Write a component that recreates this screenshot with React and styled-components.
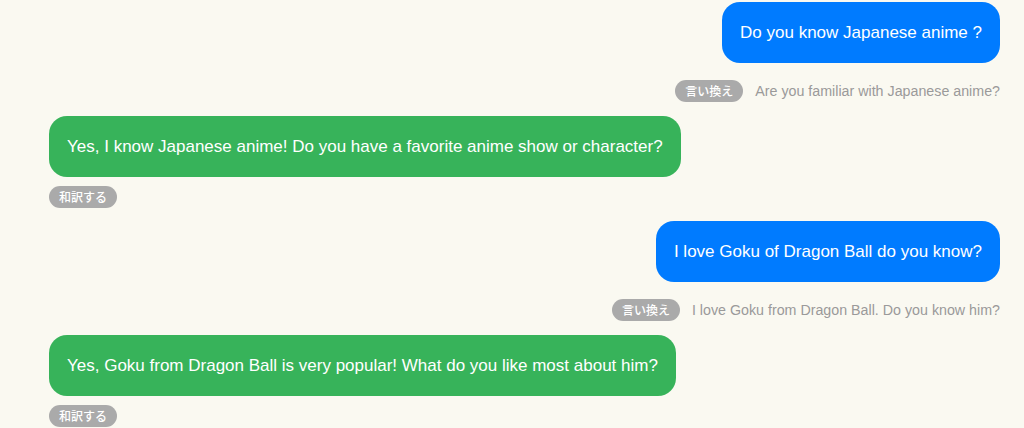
import React from "react";
import styled, { createGlobalStyle } from "styled-components";

const GlobalStyle = createGlobalStyle`
  html, body {
    margin: 0;
    padding: 0;
    background: #faf9f1;
  }
  body {
    font-family: "Liberation Sans", Arial, "Noto Sans CJK JP", sans-serif;
  }
`;

const Chat = styled.div`
  display: flex;
  flex-direction: column;
  padding: 2px 24px 0 49px;
`;

const Block = styled.div`
  display: flex;
  flex-direction: column;
  align-items: ${(p) => (p.$mine ? "flex-end" : "flex-start")};
  gap: ${(p) => (p.$mine ? "17px" : "9px")};
  margin-bottom: ${(p) => (p.$mine ? "14px" : "13px")};
`;

const Bubble = styled.div`
  background: ${(p) => (p.$mine ? "#007bff" : "#37b35a")};
  color: #fff;
  font-size: 17px;
  line-height: 21px;
  padding: 20px 18px;
  border-radius: 18px;
  white-space: nowrap;
`;

const Meta = styled.div`
  display: flex;
  align-items: center;
  gap: 12px;
`;

const Pill = styled.button`
  border: none;
  background: #aaaaaa;
  color: #fff;
  font-family: "Noto Sans CJK JP", sans-serif;
  font-size: 12px;
  font-weight: 500;
  height: 22px;
  line-height: 22px;
  padding: 0 10px;
  border-radius: 11px;
  cursor: pointer;
`;

const Rephrase = styled.span`
  color: #9a9a9a;
  font-size: 14.25px;
`;

const messages = [
  {
    mine: true,
    text: "Do you know Japanese anime ?",
    alt: "Are you familiar with Japanese anime?",
  },
  {
    mine: false,
    text: "Yes, I know Japanese anime! Do you have a favorite anime show or character?",
  },
  {
    mine: true,
    text: "I love Goku of Dragon Ball do you know?",
    alt: "I love Goku from Dragon Ball. Do you know him?",
  },
  {
    mine: false,
    text: "Yes, Goku from Dragon Ball is very popular! What do you like most about him?",
  },
];

export default function App() {
  return (
    <>
      <GlobalStyle />
      <Chat>
        {messages.map((m, i) => (
          <Block key={i} $mine={m.mine}>
            <Bubble $mine={m.mine}>{m.text}</Bubble>
            {m.mine ? (
              <Meta>
                <Pill>言い換え</Pill>
                <Rephrase>{m.alt}</Rephrase>
              </Meta>
            ) : (
              <Pill>和訳する</Pill>
            )}
          </Block>
        ))}
      </Chat>
    </>
  );
}
